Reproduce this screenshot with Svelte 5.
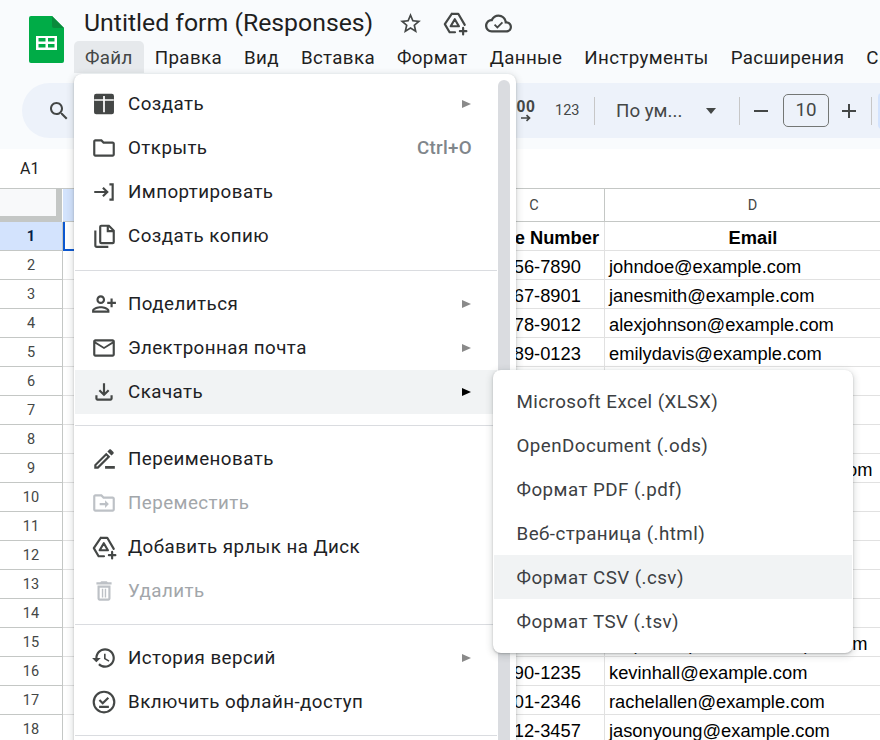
<script>
  const rows = [
    ['Phone Number', 'Email'],
    ['123-456-7890', 'johndoe@example.com'],
    ['234-567-8901', 'janesmith@example.com'],
    ['345-678-9012', 'alexjohnson@example.com'],
    ['456-789-0123', 'emilydavis@example.com'],
    ['567-890-1234', 'chrislee@example.com'],
    ['678-901-2345', 'sarahbrown@example.com'],
    ['789-012-3456', 'davidwilson@example.com'],
    ['890-123-4567', 'christopherharris@example.com'],
    ['901-234-5678', 'lauramoore@example.com'],
    ['012-345-6789', 'danielwhite@example.com'],
    ['123-567-8901', 'annaclark@example.com'],
    ['234-678-9012', 'tomlewis@example.com'],
    ['345-789-0123', 'ninascott@example.com'],
    ['456-890-1234', 'stephanieparker@example.com'],
    ['567-890-1235', 'kevinhall@example.com'],
    ['678-901-2346', 'rachelallen@example.com'],
    ['789-012-3457', 'jasonyoung@example.com']
  ];
  const menuBar = ['Файл', 'Правка', 'Вид', 'Вставка', 'Формат', 'Данные', 'Инструменты', 'Расширения', 'Справка'];
  const exportsList = ['Microsoft Excel (XLSX)', 'OpenDocument (.ods)', 'Формат PDF (.pdf)', 'Веб-страница (.html)', 'Формат CSV (.csv)', 'Формат TSV (.tsv)'];
  const driveOuter = 'M9 3.5h6l6 10.2M12 20.5H7L2.6 13 9 3.5';
</script>

<div class="page">
  <header class="top">
    <div class="brand">
      <svg class="logo" viewBox="0 0 35 47" width="35" height="47">
        <path d="M2 0h21l12 12v33a2 2 0 0 1-2 2H2a2 2 0 0 1-2-2V2a2 2 0 0 1 2-2z" fill="#00ac47"/>
        <path d="M23 0l12 12H25a2 2 0 0 1-2-2z" fill="#0a8a3c"/>
        <path d="M7 20h21v14H7zM9.500 22v3.500h7V22zm9.500 0v3.500h6.500V22zM9.500 28v3.500h7V28zm9.500 0v3.500h6.500V28z" fill="#fff" fill-rule="evenodd"/>
      </svg>
      <div class="titles">
        <div class="titleline">
          <span class="title">Untitled form (Responses)</span>
          <svg class="star" viewBox="0 0 24 24" width="25" height="25"><path fill="#444746" d="M22 9.240l-7.190-.620L12 2 9.190 8.630 2 9.240l5.460 4.730L5.820 21 12 17.270 18.180 21l-1.630-7.030L22 9.240zM12 15.400l-3.760 2.270 1-4.280-3.320-2.880 4.380-.380L12 6.100l1.710 4.040 4.380.380-3.320 2.880 1 4.280L12 15.400z"/></svg>
          <svg class="addrive" viewBox="0 0 24 24" width="26" height="26" fill="none" stroke="#444746" stroke-width="2" stroke-linejoin="round" stroke-linecap="round"><path d={driveOuter}/><path d="M11.800 8.500l3.800 6.500H8z"/><path d="M19.500 16.500v6M16.500 19.500h6"/></svg>
          <svg class="cloud" viewBox="0 0 24 24" width="27" height="27"><path fill="#444746" d="M19.350 10.040C18.670 6.590 15.640 4 12 4 9.110 4 6.600 5.640 5.350 8.040 2.340 8.360 0 10.910 0 14c0 3.310 2.690 6 6 6h13c2.760 0 5-2.240 5-5 0-2.640-2.050-4.780-4.650-4.960zM19 18H6c-2.210 0-4-1.790-4-4s1.790-4 4-4h.710C7.370 7.690 9.480 6 12 6c3.040 0 5.500 2.460 5.500 5.500v.5H19c1.660 0 3 1.340 3 3s-1.340 3-3 3z"/><path d="M8.500 13l2.500 2.500 4.500-4.500" fill="none" stroke="#444746" stroke-width="1.600"/></svg>
        </div>
      </div>
    </div>
    <nav class="menubar">
      {#each menuBar as m, i}
        <span class="mb" class:open={i === 0}>{m}</span>
      {/each}
    </nav>
    <div class="toolbar">
      <svg class="search" viewBox="0 0 24 24" width="24" height="24"><path fill="#444746" d="M15.500 14h-.790l-.280-.270C15.410 12.590 16 11.110 16 9.500 16 5.910 13.090 3 9.500 3S3 5.910 3 9.500 5.910 16 9.500 16c1.610 0 3.090-.590 4.230-1.570l.270.280v.790l5 4.990L20.490 19l-4.990-5zm-6 0C7.010 14 5 11.990 5 9.500S7.010 5 9.500 5 14 7.010 14 9.500 11.990 14 9.500 14z"/></svg>
      <div class="dec">
        <span class="zeros">00</span>
        <svg viewBox="0 0 12 8" width="12" height="8"><path d="M1 4h8M6.500 1.200L9.500 4 6.500 6.800" fill="none" stroke="#444746" stroke-width="1.700"/></svg>
      </div>
      <span class="fmt">123</span>
      <span class="sep s1"></span>
      <span class="font">По ум...</span>
      <span class="caret"></span>
      <span class="sep s2"></span>
      <svg class="minus" viewBox="0 0 14 14" width="14" height="14"><path d="M0 7h14" stroke="#444746" stroke-width="2"/></svg>
      <span class="size">10</span>
      <svg class="plus" viewBox="0 0 14 14" width="14" height="14"><path d="M0 7h14M7 0v14" stroke="#444746" stroke-width="2"/></svg>
      <span class="sep s3"></span>
      <span class="chip"></span>
    </div>
  </header>

  <div class="formula"><span>A1</span></div>

  <div class="sheet">
    <div class="corner"></div>
    <div class="ch sel"></div>
    <div class="ch"></div>
    <div class="ch">C</div>
    <div class="ch">D</div>
    {#each rows as r, i}
      <div class="rn" class:rnsel={i === 0}>{i + 1}</div>
      <div class="c" class:a1={i === 0}></div>
      <div class="c"></div>
      <div class="c phone" class:hd={i === 0}>{r[0]}</div>
      <div class="c email" class:hd={i === 0}>{r[1]}</div>
    {/each}
  </div>

  <div class="menu">
    <div class="scroll"></div>
    <div class="mi">
      <svg viewBox="0 0 24 24" class="ic"><path fill="#444746" fill-rule="evenodd" d="M4.800 2.500h14.400a2 2 0 0 1 2 2v15a2 2 0 0 1-2 2H4.800a2 2 0 0 1-2-2v-15a2 2 0 0 1 2-2zM11.200 4.500v3H3v1.600h8.200v10.500h1.600V9.100H21V7.500h-8.200v-3z"/></svg>
      <span>Создать</span><i class="arr"></i>
    </div>
    <div class="mi">
      <svg viewBox="0 0 24 24" class="ic"><path fill="#444746" d="M9.170 6l2 2H20v10H4V6h5.170M10 4H4c-1.100 0-1.990.9-1.990 2L2 18c0 1.100.9 2 2 2h16c1.100 0 2-.9 2-2V8c0-1.100-.9-2-2-2h-8l-2-2z"/></svg>
      <span>Открыть</span><em>Ctrl+O</em>
    </div>
    <div class="mi">
      <svg viewBox="0 0 24 24" class="ic" fill="none" stroke="#444746" stroke-width="2"><path d="M3 12h12M11 8l4 4-4 4M17 5h3v14h-3"/></svg>
      <span>Импортировать</span>
    </div>
    <div class="mi">
      <svg viewBox="0 0 24 24" class="ic" fill="none" stroke="#444746" stroke-width="2"><path d="M9.500 2.500h7l4.500 4.500v10.500a1 1 0 0 1-1 1H9.500a1 1 0 0 1-1-1v-14a1 1 0 0 1 1-1z"/><path d="M15.500 2.500v5h5.500" /><path d="M4 7v13.500a1.500 1.500 0 0 0 1.500 1.500H16"/></svg>
      <span>Создать копию</span>
    </div>
    <hr />
    <div class="mi">
      <svg viewBox="0 0 24 24" class="ic"><path fill="#444746" transform="translate(24 0) scale(-1 1)" d="M15 12c2.210 0 4-1.790 4-4s-1.790-4-4-4-4 1.790-4 4 1.790 4 4 4zm0-6c1.100 0 2 .9 2 2s-.9 2-2 2-2-.9-2-2 .9-2 2-2zM6 10V7H4v3H1v2h3v3h2v-3h3v-2H6zm9 4c-2.670 0-8 1.340-8 4v2h16v-2c0-2.660-5.330-4-8-4zm-6 4c.220-.720 3.310-2 6-2 2.700 0 5.800 1.290 6 2H9z"/></svg>
      <span>Поделиться</span><i class="arr"></i>
    </div>
    <div class="mi">
      <svg viewBox="0 0 24 24" class="ic"><path fill="#444746" d="M22 6c0-1.100-.9-2-2-2H4c-1.100 0-2 .9-2 2v12c0 1.100.9 2 2 2h16c1.100 0 2-.9 2-2V6zm-2 0l-8 5-8-5h16zm0 12H4V8l8 5 8-5v10z"/></svg>
      <span>Электронная почта</span><i class="arr"></i>
    </div>
    <div class="mi hov">
      <svg viewBox="0 0 24 24" class="ic"><path fill="#444746" d="M18 15v3H6v-3H4v3c0 1.100.9 2 2 2h12c1.100 0 2-.9 2-2v-3h-2zm-1-4-1.410-1.410L13 12.170V4h-2v8.170L8.410 9.590 7 11l5 5 5-5z"/></svg>
      <span>Скачать</span><i class="arr dark"></i>
    </div>
    <hr class="tight" />
    <div class="mi">
      <svg viewBox="0 0 24 24" class="ic"><path fill="#444746" d="M14.060 9.020l.920.920L5.920 19H5v-.920l9.060-9.060M17.660 3c-.250 0-.510.100-.700.290l-1.830 1.830 3.750 3.750 1.830-1.830c.390-.390.390-1.020 0-1.410l-2.340-2.340c-.200-.200-.450-.290-.710-.290zm-3.600 3.190L3 17.250V21h3.750L17.810 9.940l-3.750-3.750zM13 18.500h9V21h-9z"/></svg>
      <span>Переименовать</span>
    </div>
    <div class="mi off">
      <svg viewBox="0 0 24 24" class="ic"><path fill="#bdc1c6" d="M9.170 6l2 2H20v10H4V6h5.170M10 4H4c-1.100 0-1.990.9-1.990 2L2 18c0 1.100.9 2 2 2h16c1.100 0 2-.9 2-2V8c0-1.100-.9-2-2-2h-8l-2-2zM8 12h5V9.500l3.500 3.500-3.500 3.500V14H8z"/></svg>
      <span>Переместить</span>
    </div>
    <div class="mi">
      <svg viewBox="0 0 24 24" class="ic" fill="none" stroke="#444746" stroke-width="2" stroke-linejoin="round" stroke-linecap="round"><path d={driveOuter}/><path d="M11.800 8.500l3.800 6.500H8z"/><path d="M19.500 16.500v6M16.500 19.500h6"/></svg>
      <span>Добавить ярлык на Диск</span>
    </div>
    <div class="mi off">
      <svg viewBox="0 0 24 24" class="ic"><path fill="#bdc1c6" d="M16 9v10H8V9h8m-1.500-6h-5l-1 1H5v2h14V4h-3.500l-1-1zM18 7H6v12c0 1.100.9 2 2 2h8c1.100 0 2-.9 2-2V7zM10 10h1.300v8H10zM12.700 10H14v8h-1.300z"/></svg>
      <span>Удалить</span>
    </div>
    <hr class="tight" />
    <div class="mi">
      <svg viewBox="0 0 24 24" class="ic"><path fill="#444746" d="M13 3c-4.970 0-9 4.030-9 9H1l3.890 3.890.070.140L9 12H6c0-3.870 3.130-7 7-7s7 3.130 7 7-3.130 7-7 7c-1.930 0-3.680-.790-4.940-2.060l-1.420 1.420C8.270 19.990 10.510 21 13 21c4.970 0 9-4.030 9-9s-4.030-9-9-9zm-1 5v5l4.280 2.540.720-1.210-3.500-2.080V8H12z"/></svg>
      <span>История версий</span><i class="arr"></i>
    </div>
    <div class="mi">
      <svg viewBox="0 0 24 24" class="ic" fill="none" stroke="#444746" stroke-width="2"><circle cx="12" cy="12" r="9.500"/><path d="M7.800 10.200l3 3 5.200-5.200M7.500 16.500h9"/></svg>
      <span>Включить офлайн-доступ</span>
    </div>
    <hr class="tight" />
  </div>

  <div class="submenu">
    {#each exportsList as e, i}
      <div class="si" class:hov={i === 4}>{e}</div>
    {/each}
  </div>
</div>

<style>
  :global(body) { margin: 0; background: #fff; }
  .page {
    position: relative;
    width: 880px;
    height: 740px;
    overflow: hidden;
    font-family: Roboto, "Liberation Sans", sans-serif;
    color: #1f1f1f;
  }
  .top {
    height: 149px;
    background: #f9fbfd;
    box-sizing: border-box;
    position: relative;
    overflow: hidden;
  }
  .brand { display: flex; height: 41px; padding-left: 29px; }
  .logo { margin-top: 16px; flex: none; }
  .titles { margin-left: 20px; }
  .titleline { display: flex; align-items: center; height: 41px; padding-top: 5px; box-sizing: border-box; }
  .title { font-size: 24.800px; line-height: 36px; width: 288px; white-space: nowrap; margin-top: -1px; }
  .star { margin: 0 0 0 26px; }
  .addrive { margin: 0 0 0 19px; }
  .cloud { margin: 0 0 0 17px; }
  .menubar { display: flex; height: 32px; padding-left: 74px; white-space: nowrap; }
  .mb { padding: 0 11px; font-size: 18.750px; line-height: 34px; letter-spacing: 0.350px; }
  .mb.open { background: #e6e9ec; color: #444746; border-radius: 5px 5px 0 0; }
  .toolbar {
    margin: 10px 0 0 22px;
    height: 55px;
    background: #edf2fa;
    border-radius: 28px 0 0 28px;
    display: flex;
    align-items: center;
    color: #444746;
  }
  .search { margin-left: 25px; flex: none; margin-top: 0; }
  .dec { margin-left: 445px; width: 20px; display: flex; flex-direction: column; align-items: center; flex: none; }
  .zeros { font: bold 16px/15px "Liberation Sans", sans-serif; letter-spacing: 0.500px; }
  .fmt { margin-left: 19px; font-size: 14.500px; width: 25px; flex: none; }
  .sep { width: 1px; height: 28px; background: #c7c7c7; flex: none; }
  .s1 { margin-left: 14px; }
  .font { margin-left: 21px; font-size: 18.750px; width: 72px; flex: none; white-space: nowrap; }
  .caret { margin-left: 18px; border: 5px solid transparent; border-top: 6px solid #444746; border-bottom: 0; flex: none; }
  .s2 { margin-left: 23px; }
  .minus { margin-left: 14px; flex: none; }
  .size {
    margin-left: 15px; width: 46px; height: 33px; box-sizing: border-box;
    border: 1px solid #747775; border-radius: 5px;
    text-align: center; font-size: 18.750px; line-height: 31px; flex: none;
  }
  .plus { margin-left: 13px; flex: none; }
  .s3 { margin-left: 15px; }
  .chip { margin-left: 6px; width: 30px; height: 36px; background: #d3e3fd; border-radius: 4px; flex: none; }

  .formula { height: 39px; background: #fff; box-sizing: border-box; padding-left: 20px; font-size: 16px; line-height: 39px; color: #1f1f1f; }

  .sheet {
    display: grid;
    grid-template-columns: 63px 200px 201px 141px 296px;
    grid-auto-rows: 29px;
    grid-template-rows: 34px;
    font-family: "Liberation Sans", Arial, sans-serif;
    font-size: 18.300px;
    color: #000;
    border-top: 1px solid #c4c7c5;
    margin-top: 0;
  }
  .corner {
    background: #f8f9fa;
    border-right: 6px solid #c4c7c5;
    border-bottom: 6px solid #c4c7c5;
    box-sizing: border-box;
    height: 33px;
    margin-right: 1px;
  }
  .ch {
    height: 33px; box-sizing: border-box;
    border-bottom: 1px solid #c4c7c5;
    border-right: 1px solid #c4c7c5;
    text-align: center;
    font: 14.500px/34px Roboto, sans-serif;
    color: #444746;
  }
  .ch.sel { background: #d3e3fd; }
  .rn {
    border-bottom: 1px solid #c4c7c5;
    border-right: 1px solid #c4c7c5;
    box-sizing: border-box;
    text-align: center;
    font: 14.500px/30px Roboto, sans-serif;
    color: #444746;
    margin-top: -1px;
    height: 29px;
  }
  .rnsel { background: #d3e3fd; color: #041e49; font-weight: 700; }
  .c {
    border-bottom: 1px solid #e1e1e1;
    border-right: 1px solid #e1e1e1;
    box-sizing: border-box;
    line-height: 32px;
    white-space: nowrap;
    overflow: hidden;
    margin-top: -1px;
    height: 29px;
  }
  .c.a1 { border-left: 2px solid #0b57d0; border-bottom: 2px solid #0b57d0; }
  .phone { padding-left: 3px; }
  .phone.hd { text-align: right; padding: 0 5px 0 0; font-weight: 700; }
  .email { padding-left: 4px; overflow: visible; border-right: 0; }
  .email.hd { text-align: center; padding: 0; font-weight: 700; }

  .menu {
    position: absolute;
    left: 74px;
    top: 74px;
    width: 442px;
    height: 680px;
    box-sizing: border-box;
    padding: 8px 19px 0 1px;
    background: #fff;
    border-radius: 8px;
    box-shadow: 0 1px 2px rgba(60, 64, 67, .3), 0 2px 6px 2px rgba(60, 64, 67, .15);
  }
  .scroll {
    position: absolute;
    right: 6px;
    top: 6px;
    width: 12px;
    height: 680px;
    background: #dadce0;
    border-radius: 6px;
  }
  .mi {
    height: 44px;
    display: flex;
    align-items: center;
    padding-left: 16px;
    font-size: 18.750px;
    letter-spacing: 0.450px;
    color: #202124;
  }
  .mi span { margin-left: 11px; flex: 1; line-height: 46px; }
  .mi em { font-style: normal; font-weight: 500; font-size: 18.750px; color: #80868b; margin-right: 25px; letter-spacing: 0.300px; }
  .ic { width: 26px; height: 26px; flex: none; }
  .arr { border: 4.500px solid transparent; border-left: 9px solid #8a8a8a; border-right: 0; margin-right: 26px; }
  .arr.dark { border-left-color: #000; }
  .hov { background: #f1f3f4; }
  .off { color: #a2a6aa; }
  hr { border: 0; height: 1px; background: #dadce0; margin: 12px 0 11px; }
  hr.tight { margin: 11px 0 11px; }

  .submenu {
    position: absolute;
    left: 493px;
    top: 370px;
    width: 360px;
    height: 283px;
    box-sizing: border-box;
    padding: 9px 1px 0;
    background: #fff;
    border-radius: 8px;
    box-shadow: 0 1px 2px rgba(60, 64, 67, .3), 0 2px 6px 2px rgba(60, 64, 67, .15);
  }
  .si {
    height: 44px;
    line-height: 46px;
    padding-left: 22.500px;
    font-size: 18.750px;
    letter-spacing: 0.450px;
    color: #3c4043;
  }
</style>
